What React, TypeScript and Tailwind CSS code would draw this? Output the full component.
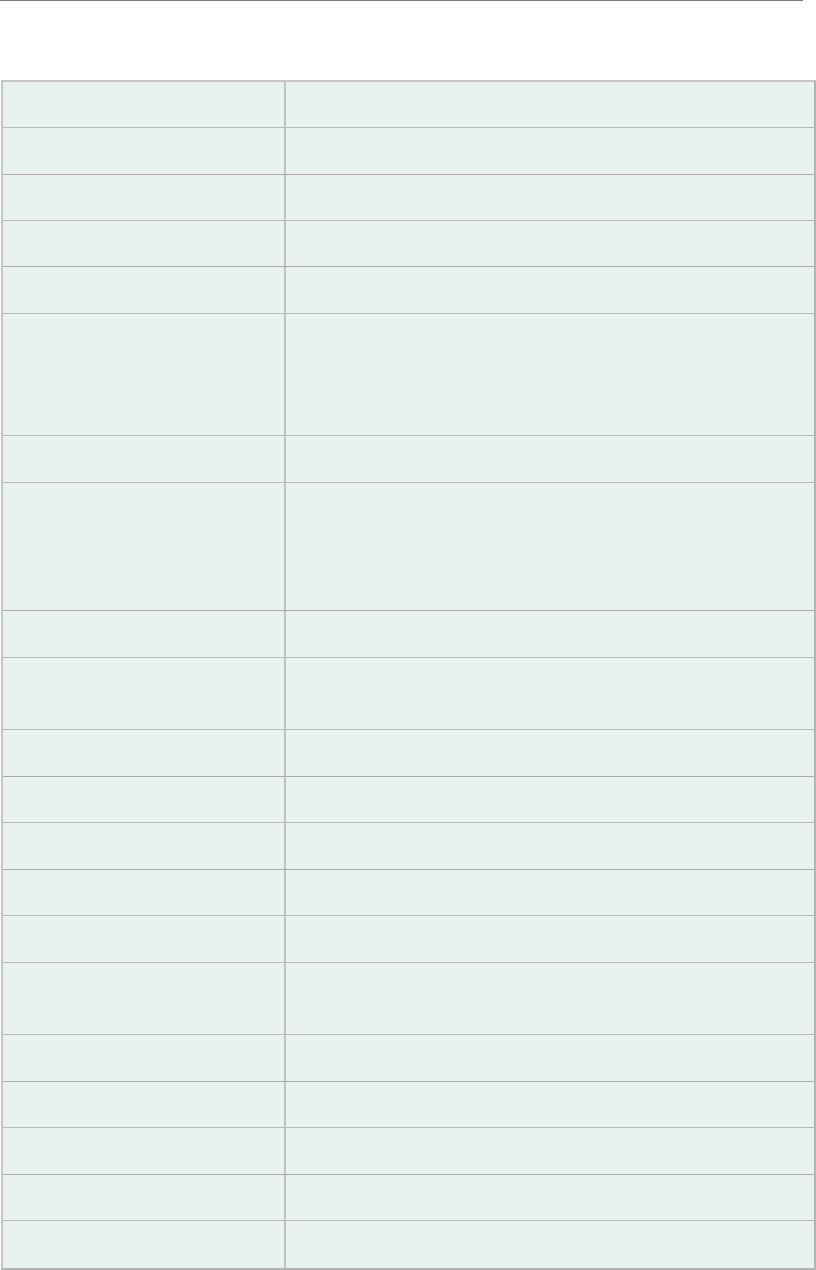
import React from "react";

const rows: string[] = [
  "h-[46px]", "h-[47px]", "h-[46px]", "h-[46px]", "h-[47px]",
  "h-[122px]", "h-[47px]", "h-[128px]", "h-[47px]", "h-[72px]",
  "h-[47px]", "h-[46px]", "h-[47px]", "h-[46px]", "h-[47px]",
  "h-[72px]", "h-[47px]", "h-[46px]", "h-[47px]", "h-[46px]", "h-[47px]",
];

const thick = new Set([1, 3, 7, 10, 12, 16, 18]);

export default function App() {
  return (
    <div className="bg-white w-[816px] min-h-[1270px] font-['Liberation_Sans',sans-serif]">
      <div className="w-[803px] h-px bg-[#7a7a7a]" />
      <div className="h-[79px]" />
      <div className="ml-px w-[815px] border-t-2 border-l-2 border-[#c6c6c6] border-r-2 border-r-[#b4b4b4] border-b-2 border-b-[#b4b4b4]">
        {rows.map((h, i) => (
          <div
            key={i}
            className={`flex ${h} ${
              i < rows.length - 1
                ? thick.has(i)
                  ? "border-b border-[#a9a9a9]"
                  : "border-b border-[#b8b8b8]"
                : ""
            }`}
          >
            <div className="w-[283px] shrink-0 bg-[#e8f2f0] border-r-2 border-[#c2c2c2]" />
            <div className="flex-1 bg-[#e8f2f0]" />
          </div>
        ))}
      </div>
    </div>
  );
}
